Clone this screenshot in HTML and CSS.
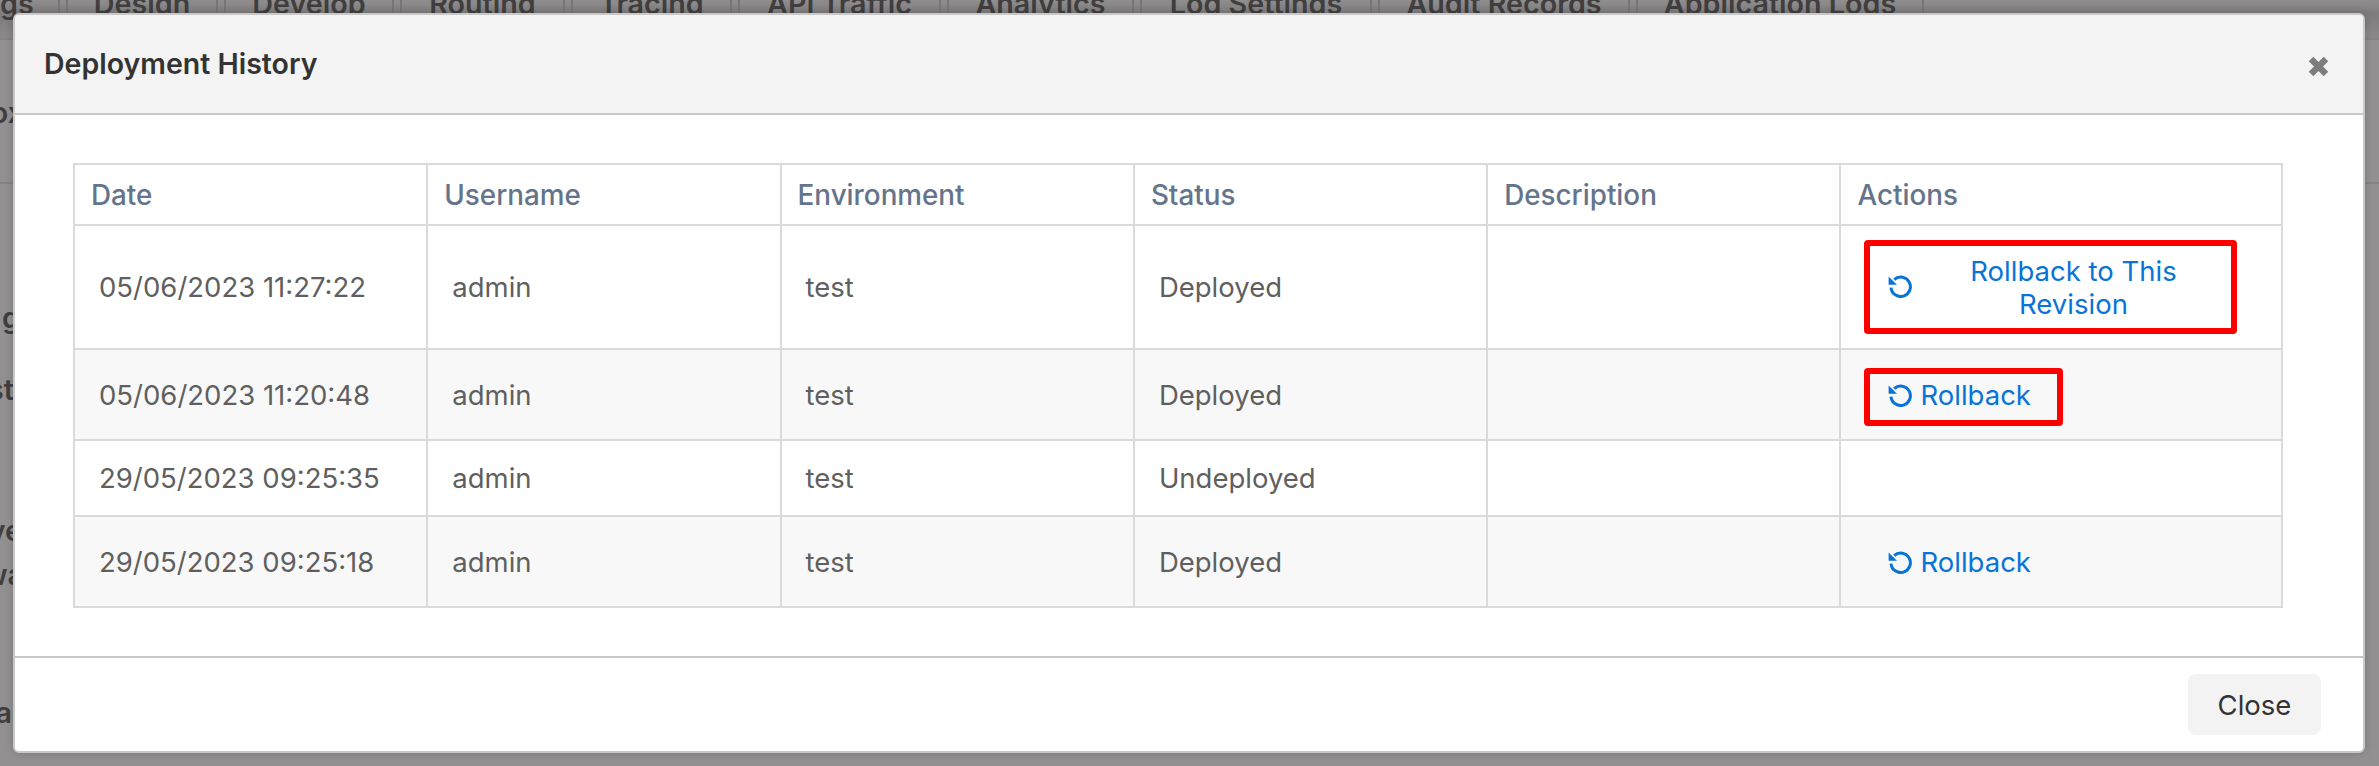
FILE: index.html
```html
<!DOCTYPE html>
<html lang="en">
<head>
<meta charset="utf-8">
<title>Deployment History</title>
<link rel="stylesheet" href="styles.css">
</head>
<body>
<div class="page">
  <nav class="tabs">
    <span class="tab tab-first">gs</span>
    <span class="tab tab-design">Design</span>
    <span class="tab tab-develop">Develop</span>
    <span class="tab tab-routing">Routing</span>
    <span class="tab tab-tracing">Tracing</span>
    <span class="tab tab-api">API Traffic</span>
    <span class="tab tab-analytics">Analytics</span>
    <span class="tab tab-log">Log Settings</span>
    <span class="tab tab-audit">Audit Records</span>
    <span class="tab tab-app">Application Logs</span>
  </nav>
  <div class="rule rule-a"></div>
  <div class="frag frag-ox">ox</div>
  <div class="rule rule-b"></div>
  <div class="frag frag-g">g</div>
  <div class="frag frag-st">st</div>
  <div class="frag frag-ve">ve</div>
  <div class="frag frag-wa">wa</div>
  <div class="frag frag-a">a</div>
</div>

<section class="modal">
  <header class="modal-header">
    <h2 class="modal-title">Deployment History</h2>
    <svg class="close-x" viewBox="0 0 20 20" aria-label="Close"><path d="M3.5 3.5 16.5 16.5M16.5 3.5 3.5 16.5"/></svg>
  </header>
  <div class="modal-body">
    <table class="history">
      <colgroup>
        <col class="col-std"><col class="col-std"><col class="col-std"><col class="col-std"><col class="col-std"><col class="col-act">
      </colgroup>
      <thead>
        <tr class="row-head"><th>Date</th><th>Username</th><th>Environment</th><th>Status</th><th>Description</th><th>Actions</th></tr>
      </thead>
      <tbody>
        <tr class="row-1">
          <td>05/06/2023 11:27:22</td><td>admin</td><td>test</td><td>Deployed</td><td></td>
          <td class="act"><a class="rollback wide marked">
            <svg class="ico" viewBox="0 0 24 24"><path class="arc" d="M6.2 5.6A9.7 9.7 0 1 1 3 13.6"/><path class="head" d="M.6 2.4 .6 10.8 9 10.8Z"/></svg>
            <span class="label">Rollback to This Revision</span></a></td>
        </tr>
        <tr class="row-2 alt">
          <td>05/06/2023 11:20:48</td><td>admin</td><td>test</td><td>Deployed</td><td></td>
          <td class="act"><a class="rollback marked">
            <svg class="ico" viewBox="0 0 24 24"><path class="arc" d="M6.2 5.6A9.7 9.7 0 1 1 3 13.6"/><path class="head" d="M.6 2.4 .6 10.8 9 10.8Z"/></svg>
            <span class="label">Rollback</span></a></td>
        </tr>
        <tr class="row-3">
          <td>29/05/2023 09:25:35</td><td>admin</td><td>test</td><td>Undeployed</td><td></td><td class="act"></td>
        </tr>
        <tr class="row-4 alt">
          <td>29/05/2023 09:25:18</td><td>admin</td><td>test</td><td>Deployed</td><td></td>
          <td class="act"><a class="rollback">
            <svg class="ico" viewBox="0 0 24 24"><path class="arc" d="M6.2 5.6A9.7 9.7 0 1 1 3 13.6"/><path class="head" d="M.6 2.4 .6 10.8 9 10.8Z"/></svg>
            <span class="label">Rollback</span></a></td>
        </tr>
      </tbody>
    </table>
  </div>
  <footer class="modal-footer">
    <button class="close-btn" type="button">Close</button>
  </footer>
</section>
</body>
</html>
```
FILE: styles.css
```css
* { box-sizing: border-box; }
html, body { margin: 0; height: 100%; }
body {
  width: 2379px;
  height: 766px;
  overflow: hidden;
  position: relative;
  background: #929090;
  font-family: Inter, "Liberation Sans", sans-serif;
  font-size: 27.5px;
  color: #5f5f5f;
}

/* dimmed page behind the dialog */
.page { height: 766px; color: #403e3e; font-weight: 600; font-size: 28.7px; }
.tabs {
  display: flex;
  gap: 6px;
  height: 38px;
  background: linear-gradient(#8f8d8d 0, #7e7c7c 14px, #8b8989 38px);
  padding-right: 454px;
}
.tab {
  height: 38px;
  border-left: 2px solid #777575;
  border-right: 2px solid #777575;
  line-height: 8px;
  text-align: center;
  white-space: nowrap;
}
.tab-first { width: 60px; border-left: 0; text-align: right; padding-right: 28px; }
.tab-design { width: 152px; }
.tab-develop { width: 170px; }
.tab-routing { width: 165px; }
.tab-tracing { width: 161px; }
.tab-api { width: 203px; }
.tab-analytics { width: 187px; }
.tab-log { width: 232px; }
.tab-audit { width: 252px; }
.tab-app { width: 288px; }
.rule { height: 2px; background: #858383; }
.frag { display: flex; justify-content: flex-end; height: 30px; line-height: 30px; white-space: nowrap; }
.frag-ox { width: 24px; margin-top: 58px; }
.rule-b { margin-top: 54px; }
.frag-g { width: 20px; margin-top: 119px; }
.frag-st { width: 14px; margin-top: 42px; }
.frag-ve { width: 22px; margin-top: 111px; }
.frag-wa { width: 24px; margin-top: 14px; }
.frag-a { width: 12px; margin-top: 108px; }

/* dialog */
.modal {
  position: absolute;
  left: 13px;
  top: 13px;
  width: 2352px;
  height: 740px;
  display: flex;
  flex-direction: column;
  background: #fff;
  border: 2px solid #c8c8c8;
  border-radius: 6px;
  box-shadow: 0 0 8px rgba(0, 0, 0, .18);
  overflow: hidden;
}
.modal-header {
  display: flex;
  align-items: center;
  justify-content: space-between;
  height: 100px;
  flex: none;
  padding: 0 33px 1px 29px;
  background: #f3f3f3;
  border-bottom: 2px solid #c8c8c8;
}
.modal-title { margin: 0; font-size: 28.5px; font-weight: 600; color: #333; }
.close-x { width: 23px; height: 23px; margin-top: 6px; }
.close-x path { fill: none; stroke: #7d7d7d; stroke-width: 5.6; }

.modal-body { flex: 1; padding: 48px 80px 0 58px; }
.history {
  width: 2208px;
  table-layout: fixed;
  border-collapse: collapse;
  border: 2px solid #dadada;
}
.col-std { width: 353.3px; }
.col-act { width: 441.5px; }
.history th, .history td { border: 2px solid #dadada; padding: 0; vertical-align: middle; }
.history th { padding-left: 16px; text-align: left; font-weight: 500; font-size: 27.8px; color: #64748b; }
.history td { padding-left: 24px; line-height: 32px; }
.history td.act { padding-left: 23px; }
.row-head { height: 61px; }
.row-1 { height: 124px; }
.row-2 { height: 91px; }
.row-3 { height: 76px; }
.row-4 { height: 91px; }
.alt { background: #f8f8f8; }

.rollback {
  display: inline-flex;
  align-items: center;
  gap: 8px;
  margin-top: 4px;
  padding: 4px 26px 8px 18px;
  border: 6px solid transparent;
  border-radius: 4px;
  color: #0874d8;
  line-height: 34px;
  vertical-align: middle;
}
.rollback.marked { border-color: #fe0000; }
.rollback.wide {
  width: 373px;
  margin-top: 0;
  padding: 9px 5px 7px 18px;
  line-height: 33px;
  text-align: center;
}
.label { flex: 1; }
.ico { width: 24px; height: 24px; flex: none; }
.wide .ico { margin-top: -4px; }
.arc { fill: none; stroke: #0874d8; stroke-width: 3; }
.head { fill: #0874d8; }

.modal-footer {
  flex: none;
  height: 95px;
  display: flex;
  justify-content: flex-end;
  align-items: flex-start;
  padding: 16px 42px 0 0;
  border-top: 2px solid #c8c8c8;
}
.close-btn {
  width: 133px;
  height: 61px;
  border: 0;
  border-radius: 8px;
  background: #f3f3f3;
  color: #333;
  font: inherit;
}
```
